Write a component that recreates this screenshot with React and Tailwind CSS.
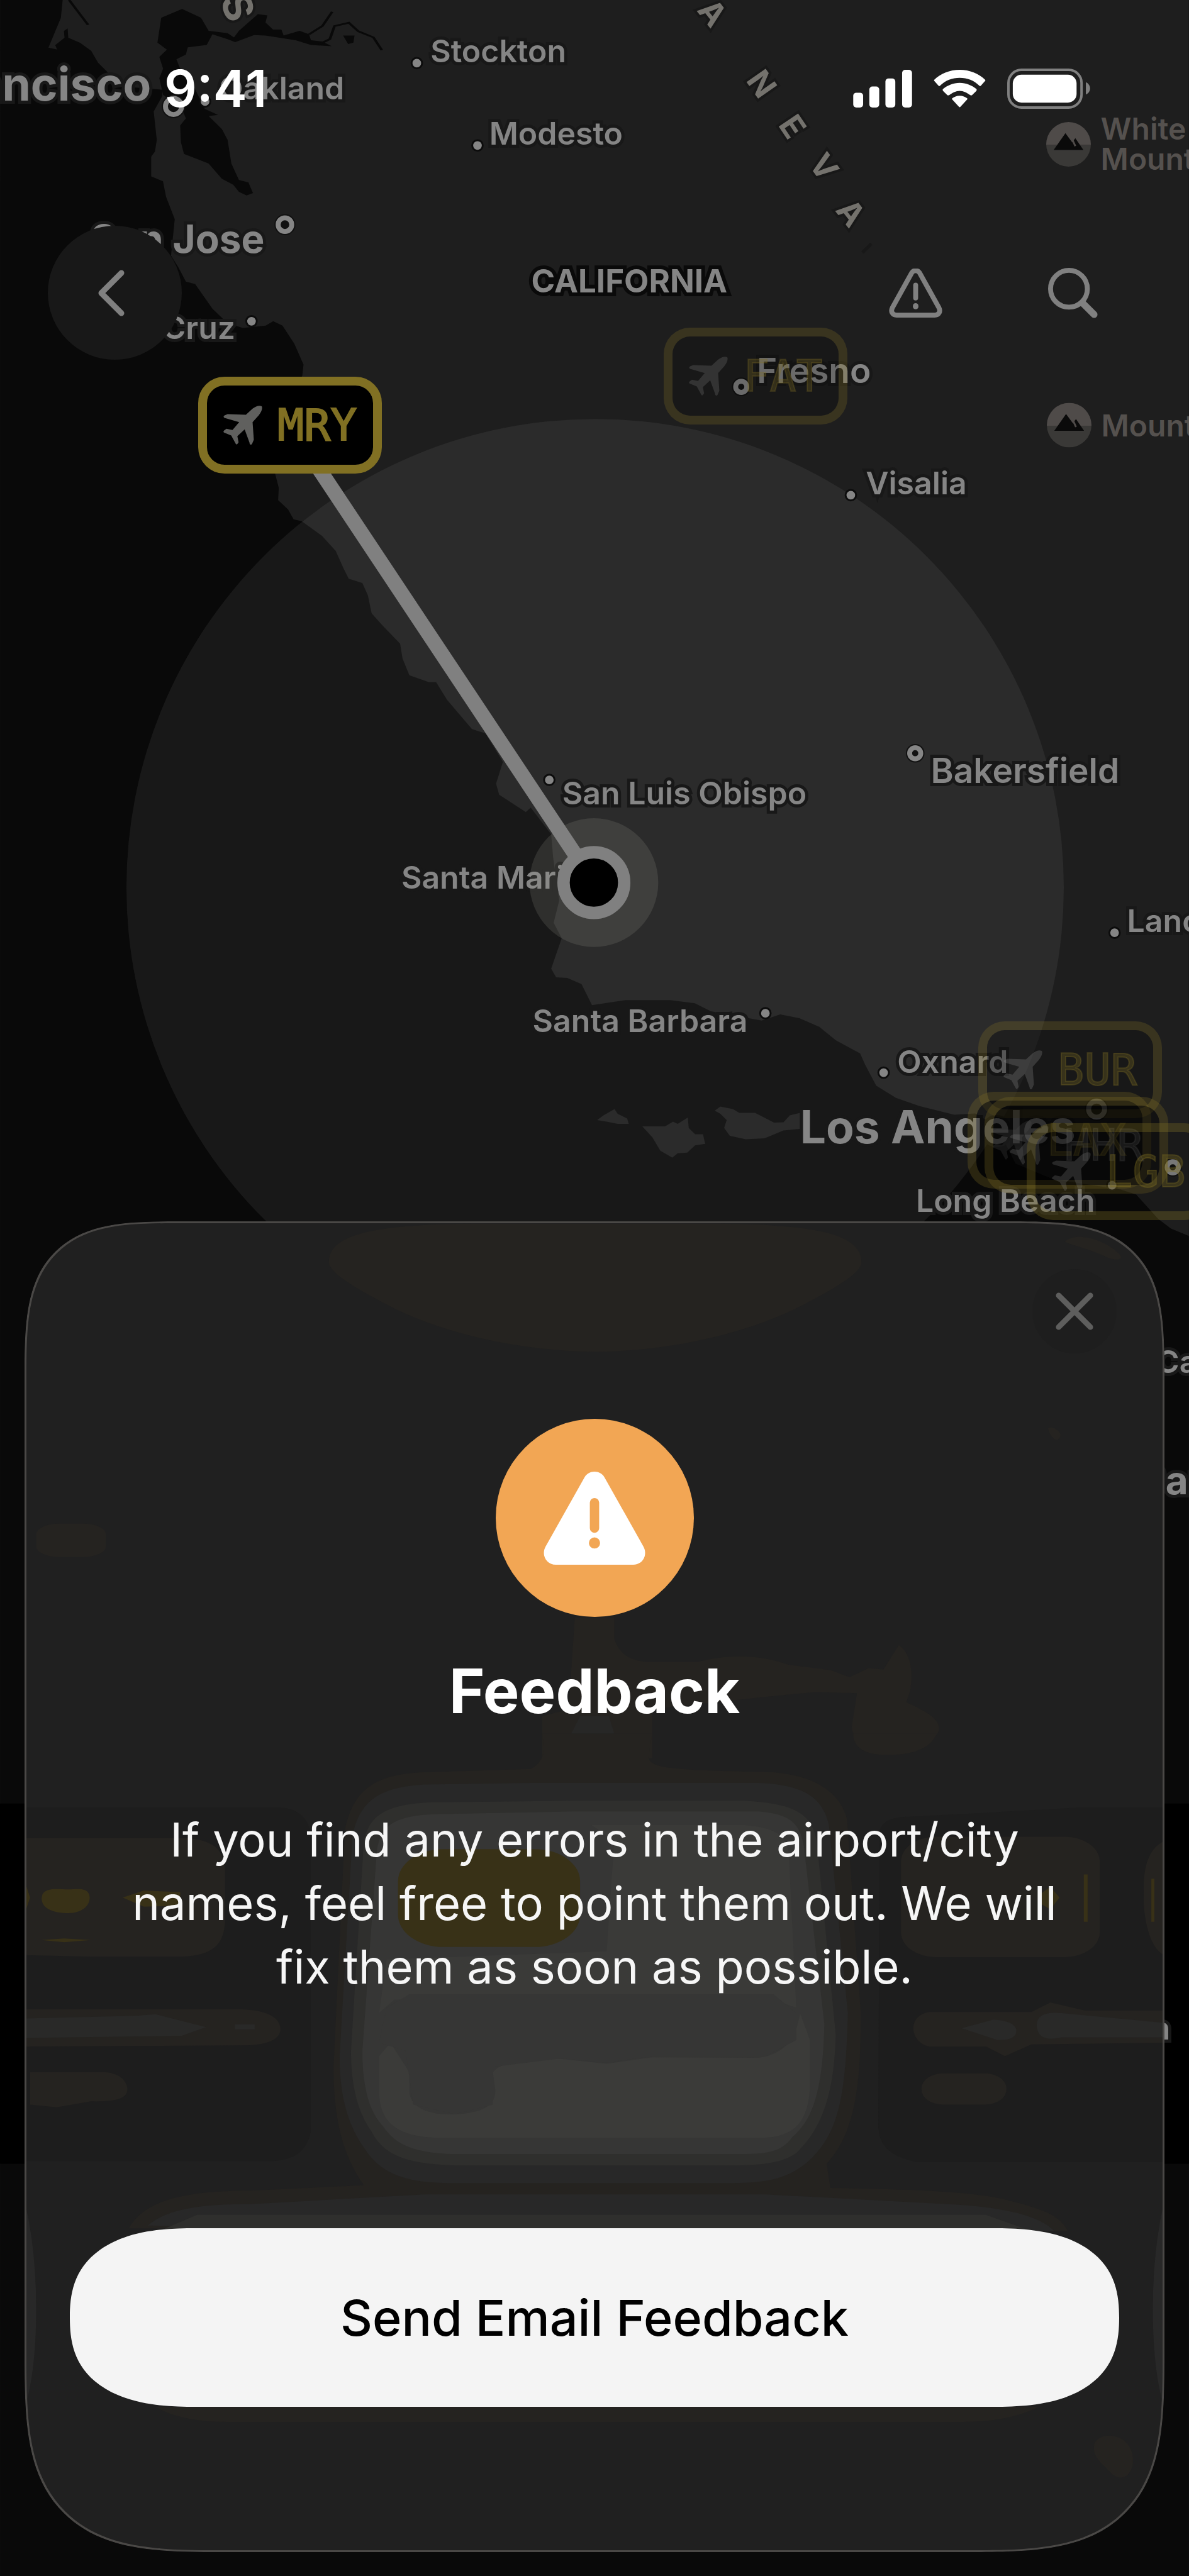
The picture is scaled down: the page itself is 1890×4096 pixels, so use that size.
import clsx from 'clsx'

// Map grid units, every coordinate below is given on this grid
const MAP_W = 1920
const MAP_H = 4162

const at = (x, y) => ({ left: `${(x / MAP_W) * 100}%`, top: `${(y / MAP_H) * 100}%` })

const TOWN   = 'text-[50px] font-semibold'
const CITY   = 'text-[55px] font-semibold'
const METRO  = 'text-[62px] font-bold'
const CAPITAL = 'text-[73px] font-bold'

// x / y is the text's baseline start, or its end when `end` is set
const LABELS = [
  { text:'Stockton',        x:695,  y:101,  cls:TOWN },
  { text:'Oakland',         x:556,  y:161,  cls:TOWN, end:true },
  { text:'San Francisco',   x:244,  y:163,  cls:CAPITAL, end:true },
  { text:'Modesto',         x:790,  y:234,  cls:TOWN },
  { text:'San Jose',        x:427,  y:408,  cls:METRO, end:true },
  { text:'Santa Cruz',      x:380,  y:548,  cls:TOWN, end:true },
  { text:'Fresno',          x:1222, y:619,  cls:CITY },
  { text:'Visalia',         x:1398, y:799,  cls:TOWN },
  { text:'Bakersfield',     x:1503, y:1265, cls:CITY },
  { text:'San Luis Obispo', x:908,  y:1300, cls:TOWN },
  { text:'Santa Maria',     x:648,  y:1436, cls:TOWN },
  { text:'Santa Barbara',   x:860,  y:1667, cls:TOWN },
  { text:'Lancaster',       x:1820, y:1506, cls:TOWN },
  { text:'Oxnard',          x:1449, y:1733, cls:TOWN },
  { text:'Los Angeles',     x:1292, y:1847, cls:CAPITAL },
  { text:'Long Beach',      x:1479, y:1958, cls:TOWN },
  { text:'Carlsbad',        x:1867, y:2218, cls:TOWN },
  { text:'San Diego',       x:1841, y:2414, cls:METRO },
  { text:'Ensenada n',      x:1890, y:3295, cls:TOWN, end:true },
]

const RANGE = [
  { ch:'S', x:384,  y:11,  deg:70, cls:'text-[64px]' },
  { ch:'A', x:1151, y:20,  deg:52, cls:'text-[51px]' },
  { ch:'N', x:1230, y:135, deg:55, cls:'text-[51px]' },
  { ch:'E', x:1280, y:204, deg:56, cls:'text-[51px]' },
  { ch:'V', x:1331, y:269, deg:54, cls:'text-[51px]' },
  { ch:'A', x:1374, y:343, deg:52, cls:'text-[51px]' },
]

const DOTS = [
  [673, 102], [331, 164], [771, 235], [406, 519], [1374, 800],
  [887, 1260], [1236, 1637], [1800, 1507], [1427, 1733], [1796, 1915],
]

const RINGS = [
  [280, 172, 13], [460, 363, 11], [1197, 625, 9], [1478, 1217, 9], [1771, 1792, 13], [1894, 1886, 9],
]

// Airports out of range are drawn see-through
const AIRPORTS = [
  { code:'FAT', x:1072, y:529,  box:'border-[#817023]/28 bg-black/20 text-[#817023]/28', plane:'text-[#858585]/25' },
  { code:'BUR', x:1580, y:1650, box:'border-[#817023]/28 bg-[#101010]/40 text-[#817023]/30', plane:'text-[#858585]/30' },
  { code:'LAX', x:1562, y:1764, box:'border-[#817023]/28 bg-black/40 text-[#817023]/28', plane:'text-[#858585]/25' },
  { code:'HHR', x:1590, y:1772, box:'border-[#817023]/28 bg-black/40 text-[#858585]/15', plane:'text-[#858585]/25' },
  { code:'LGB', x:1658, y:1815, box:'border-[#817023]/32 bg-black/10 text-[#817023]/32', plane:'text-[#858585]/25' },
  { code:'MRY', x:320,  y:609,  box:'border-[#817023] bg-black text-[#817023]', plane:'text-[#60605e]' },
]

function Plane({ className }) {
  return (
    <svg viewBox="0 0 64 64" className={className} fill="currentColor" aria-hidden="true">
      <path d="M63 1c2 4-1 10-5 15L48 27l2 29-3 7c-2 2-4 1-4-2L35 39l-12 11 2 10-2 3c-1 1-2 1-3-1L13 49 1 44c-1-1-1-2 0-3l4-3 10 2 11-13L2 20c-2-1-2-3 0-4l5-2 30 1L48 5c5-4 11-6 15-4z" />
    </svg>
  )
}

function AirportTag({ code, x, y, box, plane }) {
  return (
    <div className={clsx('absolute flex h-[154px] w-[292px] items-center gap-6 rounded-[42px] border-[14px] bg-clip-padding pl-[26px]', box)} style={at(x, y)}>
      <Plane className={clsx('size-[62px] shrink-0', plane)} />
      <span className="font-['DejaVu_Sans_Mono',monospace] text-[70px] leading-none [-webkit-text-stroke:2px_currentColor]">{code}</span>
    </div>
  )
}

function Peak({ x, y, lines }) {
  return (
    <div className="absolute flex -translate-y-1/2 items-center gap-4 text-[#55514e]" style={at(x, y)}>
      <svg viewBox="0 0 72 72" className="size-[71px] shrink-0 rounded-full" aria-hidden="true">
        <rect width="72" height="37" fill="#4f4b49" />
        <rect y="37" width="72" height="35" fill="#3a3937" />
        <path d="M12 45 31 18 42 33 47 26 60 45z" fill="#0a0a0a" />
        <path d="m42 28 5 11" stroke="#4f4b49" strokeWidth="3" />
      </svg>
      <p className="whitespace-nowrap text-[48px] leading-[48px] font-semibold">
        {lines.map(l => <span key={l} className="block">{l}</span>)}
      </p>
    </div>
  )
}

function Terrain() {
  return (
    <svg viewBox="0 0 1920 4162" className="absolute inset-0 size-full" aria-hidden="true">
      <rect width="1920" height="4162" fill="#1e1e1e" />
      {/* Pacific */}
      <path fill="#090909" d="M0 0H101L98 29 78 77 92 80 89 73 104 61 103 50 109 46 110 61 129 69 147 82 158 101 174 117 200 140 262 145 262 155 248 180 253 226 250 245 244 253 244 285 263 293 268 318 282 354 276 413 288 432 300 455 315 459 343 499 367 522 392 530 429 526 441 519 456 526 475 555 490 589 488 607 470 640 445 700 444 765 450 788 449 808 465 823 474 839 487 842 520 866 542 890 554 917 563 935 585 942 594 962 600 991 618 1011 646 1040 650 1064 661 1091 692 1102 704 1102 722 1131 762 1178 784 1185 812 1231 801 1266 806 1284 826 1297 849 1312 857 1305 890 1348 893 1384 903 1455 894 1491 907 1516 890 1565 898 1579 916 1580 939 1590 956 1624 1010 1616 1082 1616 1122 1621 1148 1634 1230 1649 1260 1639 1291 1645 1323 1659 1350 1681 1389 1702 1397 1720 1415 1754 1447 1774 1485 1787 1541 1801 1575 1799 1610 1820 1640 1880 1700 1905 1810 1922 1835 1930 1870 1969 1891 1985 1920 1997V4162H0z" />
      {/* San Francisco Bay and the delta */}
      <g transform="scale(.6122 .3827)">
        <path fill="#090909" d="M425 75 480 38 530 75 550 130 600 140 617 158 630 130 680 60 705 65 700 95 720 125 742 125 748 150 790 130 815 145 820 170 850 175 875 195 820 190 780 170 700 150 670 148 620 178 600 165 560 145 545 190 495 200 490 230 465 250 475 290 500 330 540 460 575 485 550 490 585 545 600 590 610 690 630 760 655 770 667 815 650 825 630 810 615 780 585 755 550 690 485 650 477 600 475 530 490 500 480 460 430 400 420 330 430 290 420 240 440 210 415 180z" />
        <path fill="#090909" d="M905 150 935 150 932 180 918 186z" />
        <path fill="none" stroke="#090909" strokeWidth="7" d="M815 145 850 110 876 50M840 188 870 165 882 110 920 96 945 132 985 158 1007 212M182 0 232 105" />
      </g>
      <path d="m1393 408 14-14" stroke="#181818" strokeWidth="5" />
      {/* Channel Islands */}
      <g transform="translate(500 1200) scale(.5102)" fill="#1e1e1e">
        <path d="M910 1195 930 1180 965 1160 975 1175 1005 1190 1010 1207 975 1207 940 1200z" />
        <path d="M1053 1215 1125 1215 1150 1200 1165 1207 1197 1187 1200 1220 1220 1240 1245 1240 1252 1270 1220 1275 1195 1298 1165 1300 1148 1314 1110 1292 1085 1250z" />
        <path d="M1282 1165 1300 1152 1340 1160 1360 1172 1410 1172 1470 1203 1500 1202 1520 1180 1552 1172 1552 1223 1500 1228 1440 1253 1380 1256 1330 1245 1312 1220 1320 1195 1300 1175z" />
      </g>
      <circle cx="961" cy="1434" r="757" fill="#8e8e88" fillOpacity=".12" />
      {/* Destination cards behind the sheet */}
      <rect x="-120" y="2914" width="620" height="582" rx="60" fill="#000" />
      <rect x="1420" y="2914" width="620" height="582" rx="60" fill="#000" />
    </svg>
  )
}

function TownMarks() {
  return (
    <svg viewBox="0 0 1920 4162" className="absolute inset-0 size-full" aria-hidden="true">
      {DOTS.map(([x, y]) => <circle key={`${x}-${y}`} cx={x} cy={y} r="8.5" fill="#858585" stroke="#0c0c0c" strokeWidth="3" />)}
      {RINGS.map(([x, y, r]) => (
        <g key={`${x}-${y}`} fill="#111">
          <circle cx={x} cy={y} r={r + 6} />
          <circle cx={x} cy={y} r={r} stroke="#858585" strokeWidth="8" />
        </g>
      ))}
    </svg>
  )
}

function MapView() {
  return (
    <div className="absolute inset-x-0 top-0 aspect-[1890/4096] overflow-hidden">
      <Terrain />
      {LABELS.map(l => (
        <span key={l.text}
              className={clsx('absolute -translate-y-[86%] leading-none whitespace-nowrap text-[#858585] [-webkit-text-stroke:10px_#181818] [paint-order:stroke_fill]', l.cls, l.end && '-translate-x-full')}
              style={at(l.x, l.y)}>
          {l.text}
        </span>
      ))}
      <span className="absolute -translate-y-[86%] text-[51px] leading-none font-bold text-[#858585] [-webkit-text-stroke:12px_#0a0a0a] [paint-order:stroke_fill]" style={at(858, 473)}>
        CALIFORNIA
      </span>
      {RANGE.map((r, i) => (
        <span key={i}
              className={clsx('absolute leading-none font-bold text-[#74726d] [-webkit-text-stroke:8px_#181818] [paint-order:stroke_fill]', r.cls)}
              style={{ ...at(r.x, r.y), transform: `translate(-50%, -50%) rotate(${r.deg}deg)` }}>
          {r.ch}
        </span>
      ))}
      <TownMarks />
      <Peak x={1689} y={233} lines={['White', 'Mountain']} />
      <Peak x={1690} y={687} lines={['Mount Whitney']} />

      {/* Route and current position */}
      <svg viewBox="0 0 1920 4162" className="absolute inset-0 size-full" aria-hidden="true">
        <circle cx="959" cy="1426" r="104" fill="#9a9a90" fillOpacity=".18" />
        <path d="M468 687 959 1426" stroke="#808080" strokeWidth="24" />
        <circle cx="959" cy="1426" r="49" fill="#000" stroke="#808080" strokeWidth="20" />
      </svg>
      {AIRPORTS.map(a => <AirportTag key={a.code} {...a} />)}
    </div>
  )
}

function StatusBar() {
  return (
    <div className="relative flex h-[282px] items-center justify-between pr-[157px] pl-[261px] text-white">
      <span className="text-[81px] leading-none font-semibold">9:41</span>
      <div className="flex items-center gap-[34px]">
        <svg viewBox="0 0 95 61" className="h-[60px] w-[94px]" fill="currentColor" aria-label="Signal">
          <rect y="37" width="16" height="24" rx="5" />
          <rect x="26" y="27" width="16" height="34" rx="5" />
          <rect x="52" y="14" width="16" height="47" rx="5" />
          <rect x="79" width="16" height="61" rx="5" />
        </svg>
        <svg viewBox="0 0 84 61" className="h-[60px] w-[83px]" fill="currentColor" aria-label="Wi-Fi">
          <path d="M42 0C58 0 73 6 83 16q1 1 0 2l-7 8q-1 1-2 0C65 17 54 13 42 13S19 17 10 26q-1 1-2 0l-7-8q-1-1 0-2C11 6 26 0 42 0z" />
          <path d="M42 21c10 0 20 4 27 10q1 1 0 3l-7 7q-1 1-3 0c-5-4-11-7-17-7s-12 3-17 7q-2 1-3 0l-7-7q-1-2 0-3c7-6 17-10 27-10z" />
          <path d="M42 42c5 0 9 2 12 4q1 1 0 2L43 60q-1 1-2 0L30 48q-1-1 0-2c3-2 7-4 12-4z" />
        </svg>
        <svg viewBox="0 0 134 65" className="h-[64px] w-[132px]" aria-label="Battery">
          <rect x="2" y="2" width="118" height="61" rx="21" fill="none" stroke="#808080" strokeWidth="4" />
          <rect x="9" y="10" width="103" height="45" rx="14" fill="currentColor" />
          <path d="M127 22c9 4 9 16 0 20z" fill="#808080" />
        </svg>
      </div>
    </div>
  )
}

function NavBar() {
  return (
    <header className="relative mt-[77px] flex items-center justify-between pr-[121px] pl-[76px] text-[#808080]">
      <button aria-label="Back" className="flex size-[213px] items-center justify-center rounded-full bg-[#181818]">
        <svg viewBox="0 0 44 74" className="mr-3 h-[74px] w-[44px]" fill="none" stroke="currentColor" strokeWidth="9" strokeLinecap="round" strokeLinejoin="round">
          <path d="M38 5 6 37l32 32" />
        </svg>
      </button>
      <div className="flex gap-[125px]">
        <button aria-label="Report a problem" className="flex size-[126px] items-center justify-center">
          <svg viewBox="0 0 86 80" className="h-[78px] w-[85px]" fill="none" stroke="currentColor" strokeWidth="8" strokeLinecap="round" strokeLinejoin="round">
            <path d="M36 8c3-6 11-6 14 0l31 56c3 6 0 12-7 12H12c-7 0-10-6-7-12z" />
            <path d="M43 27v21" />
            <path d="M43 61v1" strokeWidth="9" />
          </svg>
        </button>
        <button aria-label="Search" className="flex size-[126px] items-center justify-center">
          <svg viewBox="0 0 82 82" className="size-[80px]" fill="none" stroke="currentColor" strokeLinecap="round">
            <circle cx="34" cy="34" r="30" strokeWidth="8" />
            <path d="m56 57 19 19" strokeWidth="11" />
          </svg>
        </button>
      </div>
    </header>
  )
}

// Soft silhouettes of the map and the cards showing through the sheet's glass
function SheetGlass() {
  return (
    <svg viewBox="40 1973 1840 2149" preserveAspectRatio="none" className="absolute inset-0 size-full" aria-hidden="true">
      <g transform="translate(0 1940) scale(1.2245 .574)" fill="#252320">
        <path d="M434 175C432 90 500 64 640 64H930C1070 64 1137 90 1136 175 1134 200 1110 235 1070 280 1000 365 890 424 785 424S570 365 500 280C460 235 436 200 434 175z" />
        <rect x="48" y="908" width="92" height="94" rx="30" />
        <path d="M1404 115c12-28 50-12 72 35 8 20-10 18-20 5-20-20-40-28-52-40zM1382 640c5-8 14 5 16 15s-4 22-8 15-8-22-8-30zM758 1172H810V1230C815 1270 830 1295 855 1297L920 1297C960 1275 1000 1275 1040 1305L1095 1320 1120 1340 1145 1315 1165 1318 1185 1250C1200 1270 1205 1320 1200 1380L1195 1410C1225 1440 1240 1460 1238 1490 1230 1530 1205 1560 1175 1557 1145 1550 1125 1520 1123 1480L1130 1385 1075 1382 1010 1395 860 1430 860 1568H715L715 1450 750 1430z" />
        <path fill="#272726" d="M765 1450H803L810 1498 795 1518 782 1526 768 1518 753 1500z" />
      </g>
      <g transform="translate(0 2800) scale(1.2245 .8686)">
        <g fill="#1d1d1d">
          <path d="M33 138H370C395 140 408 160 410 190V740C405 775 390 792 360 795H33z" />
          <path d="M1160 180C1165 160 1180 155 1200 155L1420 138H1535V797H1210C1170 785 1160 765 1158 730z" />
        </g>
        <g fill="#252320">
          <path d="M715 0H860L855 45C860 65 880 68 1020 72 1085 80 1110 120 1117 160L1135 520C1135 640 1130 740 1090 800L1095 845C1200 848 1290 850 1340 872 1390 890 1400 905 1408 925L170 920C190 870 240 850 330 850L480 840C450 780 440 710 440 620L455 180C465 110 490 75 560 72L700 66C720 50 718 30 715 0z" />
          <path d="M33 195H250C285 200 297 220 297 260V350C295 395 280 412 240 415H120L33 412z" />
          <rect x="1188" y="192" width="262" height="224" rx="46" />
          <path d="M1535 200C1505 220 1508 280 1508 310S1515 400 1535 412zM33 513H320C355 515 370 530 370 550S350 580 320 580L33 582zM40 630H140C160 632 170 650 168 665S150 685 120 684L75 695 40 690z" />
          <path d="M1225 518H1360L1385 500 1430 515H1535V575L1360 578 1325 600 1300 582H1225C1200 575 1195 525 1225 518z" />
          <rect x="1215" y="632" width="112" height="58" rx="28" />
          <path d="M1443 1320c8-25 45-18 50 20s-15 55-28 35-26-30-22-55zM205 1252H1370Q1330 1280 1270 1280H300Q240 1280 205 1252zM1125 0H1235Q1225 38 1175 40T1125 0z" />
        </g>
        <path fill="#292928" d="M33 530 180 525 205 522 272 546 240 562 33 566zM310 541h26v9h-26zM1268 548 1310 532Q1340 535 1340 553T1315 570zM1535 538 1400 520Q1365 515 1367 545T1400 565H1535z" />
        <path fill="#282828" d="M700 92H1000C1060 95 1085 120 1093 170L1118 520C1115 680 1105 740 1070 790 1040 830 1010 836 960 836H590C530 835 500 815 480 770 455 720 448 660 448 600L465 190C475 125 500 100 560 95zM195 915C220 885 260 875 330 875L560 857H1010L1250 875C1320 880 1370 895 1390 925z" />
        <path fill="#2f2f2d" d="M760 125H980C1050 130 1070 150 1077 200L1102 560C1100 680 1080 740 1050 780 1030 800 1000 803 960 803H600C530 800 505 780 490 740 470 700 463 650 463 590L480 200C488 150 510 132 570 128zM260 895H1300L1360 925H210z" />
        <path fill="#363635" d="M760 145H1000C1045 150 1055 170 1060 210L1087 540C1085 670 1070 720 1045 750 1030 780 1010 782 970 782H600C540 780 520 760 505 730 485 700 478 650 478 590L497 220C502 170 520 152 580 150z" />
        <path fill="#3a3a38" d="M780 170H980C1025 175 1035 190 1040 220L1050 510 1010 490 780 488 520 495 500 520 510 420 800 405 810 200z" />
        <path fill="#3b3b39" d="M1055 520 1068 570V660C1065 720 1050 752 1000 752H580C520 750 502 720 500 670L500 600 515 575 540 630V670C545 700 570 710 600 708 640 705 655 690 653 660L650 630C660 610 700 600 740 605L800 614 860 602 1000 603C1040 595 1050 560 1055 520z" />
        <path fill="#363635" d="M510 510 540 485H1020L1050 520V570L1010 600H860L800 612 740 604 650 620V690L600 708 545 690 535 590 500 575z" />
        <rect x="525" y="215" width="240" height="182" rx="60" fill="#383117" />
        <path fill="#383117" d="M56 300C60 285 80 290 90 290S115 285 118 300 112 335 88 334 52 320 56 300zM162 305 190 292 238 295V320L190 322zM55 384 85 381 120 384 85 388zM33 275 40 305 33 335zM1429 262h5v88h-5zM1518 270h4v80h-4zM1370 300l15-15 12 20-12 22-15-12z" />
        <path fill="#2b2b2b" d="M33 870Q48 960 48 1070T34 1250zM1535 870Q1520 960 1520 1070T1534 1250z" opacity=".8" />
      </g>
    </svg>
  )
}

function FeedbackSheet() {
  return (
    <section role="dialog" aria-labelledby="feedback-title"
             className="relative mx-[39px] mt-auto mb-[38px] flex flex-col items-center overflow-hidden rounded-t-[176px] rounded-b-[216px] bg-[#202020] px-[72px] pt-[76px] pb-[231px] supports-[corner-shape:squircle]:rounded-t-[242px] supports-[corner-shape:squircle]:rounded-b-[310px] supports-[corner-shape:squircle]:[corner-shape:superellipse(1.63)]">
      <SheetGlass />
      <button aria-label="Close" className="relative mr-1 flex size-[134px] items-center justify-center self-end rounded-full bg-[#1e1e1e] text-[#5e5e5d]">
        <svg viewBox="0 0 64 64" className="size-[62px]" fill="none" stroke="currentColor" strokeWidth="9" strokeLinecap="round">
          <path d="m6 6 52 52M58 6 6 58" />
        </svg>
      </button>
      <div className="relative mt-[104px] flex size-[315px] items-center justify-center rounded-full bg-[#f2a654]">
        <svg viewBox="0 0 164 150" className="h-[148px] w-[162px]" aria-hidden="true">
          <path d="M66 9c7-12 25-12 32 0l63 112c7 13-1 29-17 29H20c-16 0-24-16-17-29z" fill="#fff" />
          <path d="M82 50v41" stroke="#f2a654" strokeWidth="15" strokeLinecap="round" />
          <circle cx="82" cy="115" r="9" fill="#f2a654" />
        </svg>
      </div>
      <h2 id="feedback-title" className="relative mt-[58px] text-[97px] leading-[120px] font-bold text-white">Feedback</h2>
      <p className="relative mt-[126px] max-w-[1530px] text-center text-[74px] leading-[101px] text-[#f6f6f6]">
        If you find any errors in the airport/city names, feel free to point them out. We will fix them as soon as possible.
      </p>
      <button className="relative mt-[365px] h-[284px] w-full rounded-full bg-[#f4f4f4] text-[79px] font-medium text-black supports-[corner-shape:squircle]:rounded-[200px/142px] supports-[corner-shape:squircle]:[corner-shape:superellipse(1.33)]">
        Send Email Feedback
      </button>
      <div className="pointer-events-none absolute inset-0 rounded-[inherit] border-[3px] border-[#4a4846] [corner-shape:inherit]" />
    </section>
  )
}

export default function App() {
  return (
    <main className="relative flex min-h-screen flex-col overflow-hidden bg-[#090909] font-['Inter','Liberation_Sans',sans-serif]">
      <MapView />
      <StatusBar />
      <NavBar />
      <FeedbackSheet />
    </main>
  )
}
